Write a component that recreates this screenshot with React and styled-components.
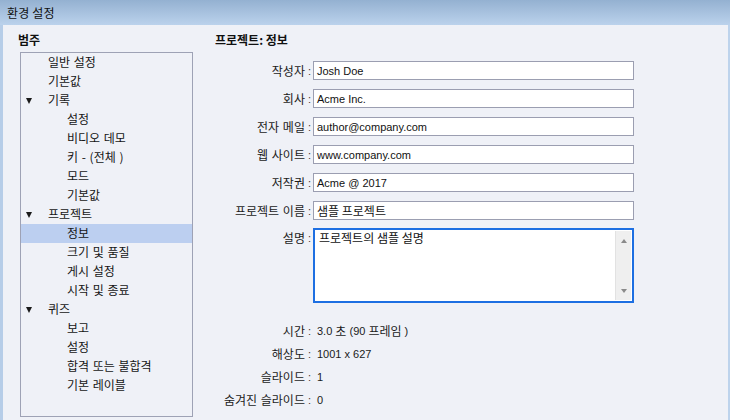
import React from "react";
import styled, { createGlobalStyle } from "styled-components";

const Global = createGlobalStyle`
  html, body { margin: 0; padding: 0; }
  body { font-family: "Noto Sans CJK KR", "Liberation Sans", sans-serif; background: #b9d0ea; }
`;

const KR = `"Noto Sans CJK KR", sans-serif`;
const LAT = `"Liberation Sans", "Noto Sans CJK KR", sans-serif`;

const Window = styled.div`
  width: 730px;
  height: 420px;
  display: flex;
  flex-direction: column;
  background: linear-gradient(to right, #b6cde8, #bdd3ec);
  overflow: hidden;
`;

const TitleBar = styled.div`
  height: 25px;
  flex: none;
  display: flex;
  align-items: center;
  padding-left: 7px;
  background: linear-gradient(to bottom, #94b1d1, #bbd2ec);
  font-family: ${KR};
  font-size: 12px;
  color: #101010;
  letter-spacing: 0.2px;
`;

const Panel = styled.div`
  flex: 1;
  margin: 0 2px 0 3px;
  background: #eff1f7;
  display: flex;
  min-height: 0;
`;

const Sidebar = styled.div`
  width: 190px;
  box-sizing: border-box;
  flex: none;
  padding-left: 15px;
  display: flex;
  flex-direction: column;
`;

const SectionTitle = styled.div`
  font-family: ${KR};
  font-size: 12px;
  font-weight: 700;
  line-height: 14px;
  padding-top: 8px;
  margin-bottom: 5px;
  color: #111;
  padding-left: ${(p) => p.$indent || 0}px;
`;

const Tree = styled.div`
  margin-left: 2px;
  width: 173px;
  height: 365px;
  box-sizing: border-box;
  border: 1px solid #9ea2b5;
  display: flex;
  flex-direction: column;
`;

const TreeRow = styled.div`
  height: 19px;
  flex: none;
  display: flex;
  align-items: center;
  padding-left: ${(p) => (p.$child ? 46 : 27)}px;
  padding-bottom: 2px;
  box-sizing: border-box;
  position: relative;
  background: ${(p) => (p.$selected ? "#bccff0" : "transparent")};
  font-family: ${KR};
  font-size: 12px;
  color: #151515;
  white-space: pre;
  word-spacing: 1px;
`;

const Caret = styled.span`
  position: absolute;
  left: 5px;
  top: 7px;
  width: 0;
  height: 0;
  border-left: 3.5px solid transparent;
  border-right: 3.5px solid transparent;
  border-top: 6px solid #1a1a1a;
`;

const Content = styled.div`
  flex: 1;
  padding-left: 17px;
  display: flex;
  flex-direction: column;
`;

const Form = styled.div`
  display: grid;
  grid-template-columns: 101px 321px;
  column-gap: 2px;
  row-gap: 9px;
  margin-top: 9px;
`;

const Label = styled.div`
  font-family: ${KR};
  font-size: 12px;
  color: #1a1a1a;
  text-align: right;
  white-space: nowrap;
  display: flex;
  justify-content: flex-end;
  align-items: ${(p) => (p.$top ? "flex-start" : "center")};
  padding-top: ${(p) => (p.$top ? 1 : 0)}px;
  line-height: ${(p) => (p.$top ? "16px" : "normal")};
  word-spacing: 1px;
  &::after {
    content: ":";
    margin-left: 3px;
    color: #4a3a2a;
    font-family: ${LAT};
    font-size: 11px;
  }
`;

const Input = styled.div`
  height: 19px;
  box-sizing: border-box;
  border: 1px solid #9b9eb1;
  background: #fff;
  display: flex;
  align-items: center;
  padding-left: 3px;
  font-family: ${(p) => (p.$kr ? KR : LAT)};
  font-size: ${(p) => (p.$kr ? 12 : 11)}px;
  color: #111;
  white-space: pre;
`;

const TextArea = styled.div`
  height: 75px;
  box-sizing: border-box;
  border: 2px solid #1d6fe2;
  background: #fff;
  display: flex;
  margin-top: -1px;
`;

const TextBody = styled.div`
  flex: 1;
  padding: 0 4px;
  font-family: ${KR};
  font-size: 12px;
  line-height: 16px;
  color: #111;
`;

const Scrollbar = styled.div`
  width: 16px;
  margin: 1px 1px 1px 0;
  background: #efefef;
  border-left: 1px solid #e2e2e2;
  display: flex;
  flex-direction: column;
  justify-content: space-between;
  align-items: center;
  padding: 8px 0 7px;
  box-sizing: border-box;
`;

const Arrow = styled.span`
  width: 0;
  height: 0;
  border-left: 3.5px solid transparent;
  border-right: 3.5px solid transparent;
  ${(p) =>
    p.$up
      ? "border-bottom: 4px solid #8a8a8a;"
      : "border-top: 4px solid #8a8a8a;"}
`;

const Info = styled.div`
  display: grid;
  grid-template-columns: 101px 321px;
  column-gap: 2px;
  grid-auto-rows: 23px;
  margin-top: 16px;
`;

const Value = styled.div`
  display: flex;
  align-items: center;
  padding-left: 4px;
  font-family: ${LAT};
  font-size: 11px;
  color: #1a1a1a;
  white-space: pre;
`;

const Kr = styled.span`
  font-family: ${KR};
  font-size: 12px;
`;

const treeItems = [
  { t: "일반 설정" },
  { t: "기본값" },
  { t: "기록", caret: true },
  { t: "설정", child: true },
  { t: "비디오 데모", child: true },
  { t: "키 - (전체 )", child: true },
  { t: "모드", child: true },
  { t: "기본값", child: true },
  { t: "프로젝트", caret: true },
  { t: "정보", child: true, selected: true },
  { t: "크기 및 품질", child: true },
  { t: "게시 설정", child: true },
  { t: "시작 및 종료", child: true },
  { t: "퀴즈", caret: true },
  { t: "보고", child: true },
  { t: "설정", child: true },
  { t: "합격 또는 불합격", child: true },
  { t: "기본 레이블", child: true },
];

const fields = [
  { l: "작성자", v: "Josh Doe" },
  { l: "회사", v: "Acme Inc." },
  { l: "전자 메일", v: "author@company.com" },
  { l: "웹 사이트", v: "www.company.com" },
  { l: "저작권", v: "Acme @ 2017" },
  { l: "프로젝트 이름", v: "샘플 프로젝트", kr: true },
];

export default function App() {
  return (
    <>
      <Global />
      <Window>
        <TitleBar>환경 설정</TitleBar>
        <Panel>
          <Sidebar>
            <SectionTitle>범주</SectionTitle>
            <Tree>
              {treeItems.map((it, i) => (
                <TreeRow key={i} $child={it.child} $selected={it.selected}>
                  {it.caret && <Caret />}
                  {it.t}
                </TreeRow>
              ))}
            </Tree>
          </Sidebar>
          <Content>
            <SectionTitle $indent={5}>프로젝트: 정보</SectionTitle>
            <Form>
              {fields.map((f) => (
                <React.Fragment key={f.l}>
                  <Label>{f.l}</Label>
                  <Input $kr={f.kr}>{f.v}</Input>
                </React.Fragment>
              ))}
              <Label $top>설명</Label>
              <TextArea>
                <TextBody>프로젝트의 샘플 설명</TextBody>
                <Scrollbar>
                  <Arrow $up />
                  <Arrow />
                </Scrollbar>
              </TextArea>
            </Form>
            <Info>
              <Label>시간</Label>
              <Value>
                3.0 <Kr>초</Kr> (90 <Kr>프레임</Kr> )
              </Value>
              <Label>해상도</Label>
              <Value>1001 x 627</Value>
              <Label>슬라이드</Label>
              <Value>1</Value>
              <Label>숨겨진 슬라이드</Label>
              <Value>0</Value>
            </Info>
          </Content>
        </Panel>
      </Window>
    </>
  );
}
